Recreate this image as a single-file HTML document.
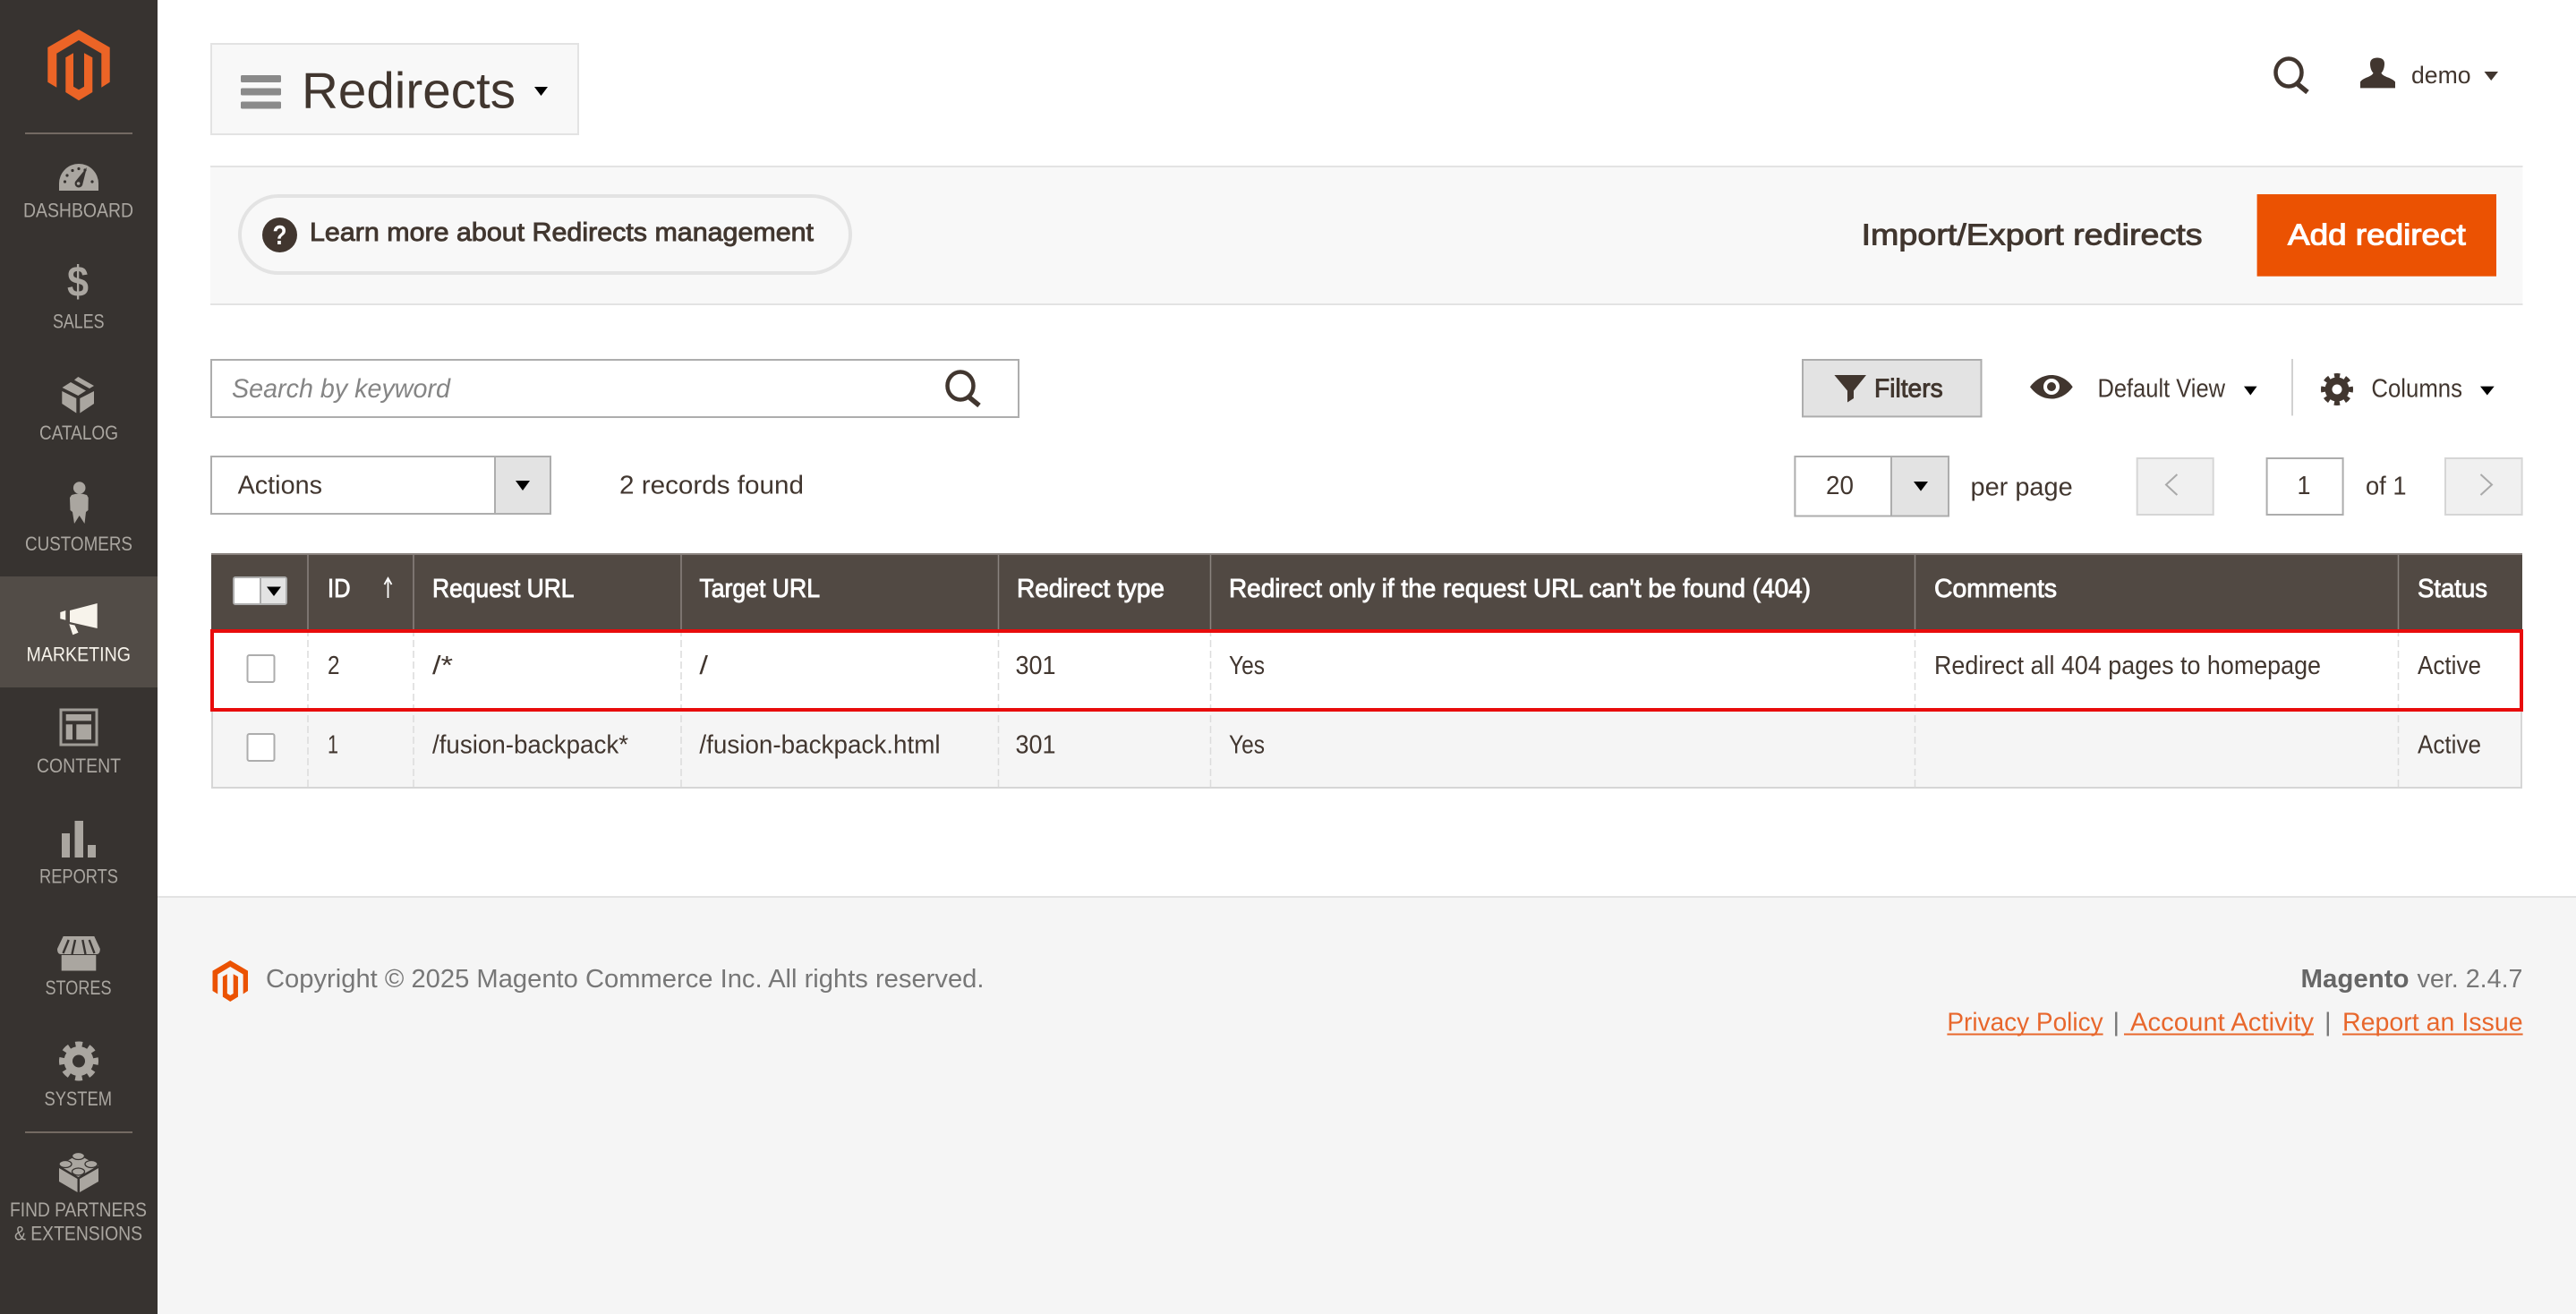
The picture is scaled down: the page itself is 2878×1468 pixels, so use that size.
<!DOCTYPE html>
<html lang="en"><head><meta charset="utf-8"><title>Redirects</title>
<style>
html,body{margin:0;padding:0;background:#fff}
svg{display:block}
text{font-family:"Liberation Sans",sans-serif;font-size:29px;fill:#41362f}
.s{stroke:#41362f;stroke-width:.9px}
.w{fill:#fff;stroke:#fff;stroke-width:.9px}
.n{font-size:22px;fill:#aaa6a0}
.f{fill:#777}
.l{fill:#e8672c}
</style></head><body>
<svg width="2878" height="1468" viewBox="0 0 2878 1468" xmlns="http://www.w3.org/2000/svg">
<!-- sidebar -->
<rect x="0" y="0" width="176" height="1468" fill="#373330"/>
<rect x="0" y="644" width="176" height="124" fill="#524c47"/>
<g fill="#ec6426">
<path d="M88 33L122.7 53V91.7L113.3 97.7V59.7L88 45L63.3 59.7V97.7L53.3 91.7V53Z"/>
<path d="M73.3 64.3L82 59.3V96.7L88 100.3L94 96.7V59.3L103.3 64.3V103L88 112.3L73.3 103Z"/>
</g>
<rect x="28" y="148" width="120" height="2" fill="#736a62"/>
<rect x="28" y="1264" width="120" height="2" fill="#736a62"/>
<!-- dashboard -->
<path d="M66 213V205A22 22 0 0 1 110 205V213Z" fill="#aaa6a0"/>
<g fill="#373330"><circle cx="72.5" cy="203" r="1.6"/><circle cx="75" cy="196" r="1.6"/><circle cx="81" cy="190.5" r="1.6"/><circle cx="88" cy="188.5" r="1.6"/><circle cx="95" cy="190" r="1.6"/><circle cx="103" cy="203" r="1.6"/><path d="M84 203L97 187L92 207A4.4 4.4 0 1 1 84 203Z"/></g>
<circle cx="87.6" cy="205" r="1.8" fill="#aaa6a0"/>
<!-- sales -->
<text x="75" y="331" textLength="24" lengthAdjust="spacingAndGlyphs" style="font-size:48px;font-weight:bold;fill:#aaa6a0">$</text>
<!-- catalog -->
<g fill="#aaa6a0"><path d="M69.3 437L85.3 445V461.5L69.3 451Z"/><path d="M89.3 445L105 437V451L89.3 461.5Z"/><path d="M69.5 433L79 427L96 436.5L87.3 442Z"/><path d="M83 424.5L87.3 421L105 431L100 434Z"/></g>
<!-- customers -->
<g fill="#aaa6a0"><circle cx="88.7" cy="545" r="6.8"/><path d="M80 553Q88.7 550 97 553L98.7 556L98.5 570L96 572L94.5 585L88.7 576L83 585L81 572L78.5 570L78 556Z"/></g>
<!-- marketing -->
<g fill="#f7f3eb"><path d="M78 682L108.7 674V702L78 695Z"/><path d="M67.3 684L73.3 682V692.7L67.3 691.3Z"/><path d="M77.3 697.3L83.5 698.5L87.5 706.7L81.3 709.3Z"/></g>
<!-- content -->
<rect x="68" y="793" width="40" height="39" fill="none" stroke="#a09d97" stroke-width="3"/>
<g fill="#aaa6a0"><rect x="73.7" y="798" width="28.3" height="7.3"/><rect x="73.7" y="809.3" width="7.3" height="17"/><rect x="85.3" y="809.3" width="16.7" height="17"/></g>
<!-- reports -->
<g fill="#aaa6a0"><rect x="69" y="931" width="9" height="27"/><rect x="83.5" y="917" width="9.5" height="41"/><rect x="98" y="944" width="9" height="14"/></g>
<!-- stores -->
<path d="M70.7 1046H105.3L111.8 1060Q111.8 1066 108 1066H68Q64 1066 64 1060Z" fill="#aaa6a0"/>
<rect x="68.7" y="1067" width="38.6" height="17.5" fill="#aaa6a0"/>
<path d="M76.7 1050L70.5 1065M84 1050L80.5 1066M92.3 1050L95.5 1066M99.7 1050L105.5 1065" stroke="#373330" stroke-width="2.4" fill="none"/>
<!-- system -->
<circle cx="88" cy="1185.5" r="16.5" fill="#aaa6a0"/>
<circle cx="88" cy="1185.5" r="18.5" fill="none" stroke="#aaa6a0" stroke-width="7" stroke-dasharray="7.5 7.03" stroke-dashoffset="3.75"/>
<circle cx="88" cy="1185.5" r="7" fill="#373330"/>
<!-- partners -->
<g fill="#aaa6a0"><path d="M66 1305L86.5 1317V1332L66 1320Z"/><path d="M89 1317L110 1305V1320L89 1332Z"/><path d="M66 1302L87.5 1290L110 1302L87.5 1315Z"/></g>
<g fill="#aaa6a0" stroke="#373330" stroke-width="1.3"><ellipse cx="87.5" cy="1291.5" rx="7" ry="4"/><ellipse cx="73" cy="1300.5" rx="7" ry="4"/><ellipse cx="102" cy="1300.5" rx="7" ry="4"/><ellipse cx="87.5" cy="1309" rx="7" ry="4"/></g>
<!-- sidebar labels -->
<text class="n" x="26" y="242.7" textLength="123" lengthAdjust="spacingAndGlyphs">DASHBOARD</text>
<text class="n" x="59" y="366.7" textLength="57.5" lengthAdjust="spacingAndGlyphs">SALES</text>
<text class="n" x="44" y="491" textLength="88" lengthAdjust="spacingAndGlyphs">CATALOG</text>
<text class="n" x="28" y="615" textLength="120" lengthAdjust="spacingAndGlyphs">CUSTOMERS</text>
<text class="n" x="29.5" y="738.7" textLength="116.5" lengthAdjust="spacingAndGlyphs" style="fill:#f7f3eb">MARKETING</text>
<text class="n" x="41" y="863" textLength="94" lengthAdjust="spacingAndGlyphs">CONTENT</text>
<text class="n" x="44" y="986.7" textLength="88" lengthAdjust="spacingAndGlyphs">REPORTS</text>
<text class="n" x="50.5" y="1111" textLength="74" lengthAdjust="spacingAndGlyphs">STORES</text>
<text class="n" x="49.5" y="1235" textLength="75.5" lengthAdjust="spacingAndGlyphs">SYSTEM</text>
<text class="n" x="11" y="1359" textLength="153" lengthAdjust="spacingAndGlyphs">FIND PARTNERS</text>
<text class="n" x="16" y="1385.7" textLength="143" lengthAdjust="spacingAndGlyphs">&amp; EXTENSIONS</text>

<!-- title -->
<rect x="236" y="49" width="410" height="101" fill="#f8f8f8" stroke="#e3e3e3" stroke-width="2"/>
<g fill="#8a8a8a"><rect x="269" y="84" width="45" height="8" rx="1.5"/><rect x="269" y="98.5" width="45" height="8" rx="1.5"/><rect x="269" y="113.5" width="45" height="8" rx="1.5"/></g>
<text x="337" y="120.7" textLength="239" lengthAdjust="spacingAndGlyphs" style="font-size:57px">Redirects</text>
<path d="M597 97H612L604.5 107Z" fill="#000"/>
<!-- top right -->
<g fill="none" stroke="#41362f"><ellipse cx="2557" cy="81" rx="14.5" ry="15.5" stroke-width="4.5"/><path d="M2567 94L2578 103" stroke-width="5.5"/></g>
<path d="M2637 98.4V91.5C2640 86.5 2650 86 2651.5 81.5C2648 78 2648 72 2648 71C2648 66 2652 64.5 2656 64.5C2660 64.5 2664 66 2664 71C2664 72 2664 78 2660.5 81.5C2662 86 2672 86.5 2676 91.5V98.4Z" fill="#41362f"/>
<text x="2694" y="93" textLength="66.6" lengthAdjust="spacingAndGlyphs" style="font-size:27px">demo</text>
<path d="M2775.5 80H2791L2783.2 90Z" fill="#41362f"/>
<!-- action bar -->
<rect x="235" y="185" width="2583.5" height="155" fill="#f8f8f8"/>
<rect x="235" y="185" width="2583.5" height="2" fill="#e3e3e3"/>
<rect x="235" y="339" width="2583.5" height="2" fill="#e3e3e3"/>
<rect x="268" y="219" width="682" height="86" rx="43" fill="#f8f8f8" stroke="#e3e3e3" stroke-width="4"/>
<circle cx="312.5" cy="262.5" r="19.5" fill="#41362f"/>
<text x="304.5" y="273" textLength="16" lengthAdjust="spacingAndGlyphs" style="font-size:31px;font-weight:bold;fill:#fff">?</text>
<text class="s" x="346" y="269" textLength="563" lengthAdjust="spacingAndGlyphs">Learn more about Redirects management</text>
<text class="s" x="2079.6" y="273.5" textLength="381" lengthAdjust="spacingAndGlyphs" style="font-size:33px">Import/Export redirects</text>
<rect x="2521.6" y="217" width="267.4" height="91.7" fill="#eb5202"/>
<text class="w" x="2556" y="273.5" textLength="198.7" lengthAdjust="spacingAndGlyphs" style="font-size:33px;stroke-width:1.1px">Add redirect</text>
<!-- search -->
<rect x="236" y="402" width="902" height="64" fill="#fff" stroke="#adadad" stroke-width="2"/>
<text x="259" y="444" textLength="244" lengthAdjust="spacingAndGlyphs" style="font-style:italic;fill:#858585;font-size:30px">Search by keyword</text>
<g fill="none" stroke="#41362f" transform="translate(-1484 350)"><ellipse cx="2557" cy="81" rx="14.5" ry="15.5" stroke-width="4.5"/><path d="M2567 94L2578 103" stroke-width="5.5"/></g>
<!-- filters etc -->
<rect x="2014" y="402" width="199.5" height="63.4" fill="#e3e3e3" stroke="#adadad" stroke-width="2"/>
<path d="M2049.4 419H2085L2071 436.5V445L2064 449.5V436.5Z" fill="#41362f"/>
<text class="s" x="2094" y="443.5" textLength="76.7" lengthAdjust="spacingAndGlyphs">Filters</text>
<path d="M2268 432.2C2274 424 2283 419 2292 419C2301 419 2310 424 2315.7 432.2C2310 440.5 2301 445.5 2292 445.5C2283 445.5 2274 440.5 2268 432.2Z" fill="#41362f"/>
<circle cx="2292" cy="432" r="9" fill="#fff"/><circle cx="2292" cy="432" r="5" fill="#41362f"/>
<text x="2343.5" y="443.5" textLength="142.5" lengthAdjust="spacingAndGlyphs">Default View</text>
<path d="M2507 431.6H2521.6L2514.3 441.5Z" fill="#000"/>
<rect x="2560" y="401" width="2" height="63.4" fill="#d1d1d1"/>
<circle cx="2611" cy="435" r="13.5" fill="#41362f"/>
<circle cx="2611" cy="435" r="15" fill="none" stroke="#41362f" stroke-width="6" stroke-dasharray="6 5.78" stroke-dashoffset="3"/>
<circle cx="2611" cy="435" r="5.5" fill="#fff"/>
<text x="2649.4" y="443.5" textLength="101.6" lengthAdjust="spacingAndGlyphs">Columns</text>
<path d="M2771 431.6H2786.7L2778.8 441.5Z" fill="#000"/>
<!-- actions select -->
<rect x="236" y="510" width="379" height="64" fill="#fff" stroke="#adadad" stroke-width="2"/>
<rect x="552" y="511" width="62" height="62" fill="#e3e3e3"/><rect x="552" y="511" width="2" height="62" fill="#adadad"/>
<path d="M576 537H592L584 548Z" fill="#000"/>
<text x="265.6" y="551.7" textLength="94.4" lengthAdjust="spacingAndGlyphs">Actions</text>
<text x="692" y="551.5" textLength="206" lengthAdjust="spacingAndGlyphs">2 records found</text>
<!-- pager -->
<rect x="2005.4" y="510" width="171.6" height="66.5" fill="#fff" stroke="#adadad" stroke-width="2"/>
<rect x="2112" y="511" width="64" height="64.5" fill="#e3e3e3"/><rect x="2112" y="511" width="2" height="64.5" fill="#adadad"/>
<path d="M2138 538H2154L2146 548.6Z" fill="#000"/>
<text x="2040" y="552" textLength="31" lengthAdjust="spacingAndGlyphs">20</text>
<text x="2201.5" y="553.4" textLength="114.2" lengthAdjust="spacingAndGlyphs">per page</text>
<rect x="2387.7" y="512" width="85" height="63" fill="#f0f0f0" stroke="#d6d6d6" stroke-width="2"/>
<path d="M2432.4 530L2420 541.5L2432.4 553" fill="none" stroke="#a9a9a9" stroke-width="2"/>
<rect x="2532.6" y="512" width="85" height="63" fill="#fff" stroke="#adadad" stroke-width="2"/>
<text x="2566.5" y="552" textLength="15" lengthAdjust="spacingAndGlyphs">1</text>
<text x="2643" y="552.5" textLength="45.5" lengthAdjust="spacingAndGlyphs">of 1</text>
<rect x="2732" y="512" width="85.6" height="63" fill="#f0f0f0" stroke="#d6d6d6" stroke-width="2"/>
<path d="M2771.5 530L2784 541.5L2771.5 553" fill="none" stroke="#a9a9a9" stroke-width="2"/>
<!-- table -->
<rect x="236" y="618" width="2582" height="85" fill="#514943"/>
<rect x="236" y="618" width="2582" height="2" fill="#8a837f"/>
<rect x="236" y="703" width="2582" height="92" fill="#fff"/>
<rect x="236" y="795" width="2582" height="84" fill="#f5f5f5"/>
<rect x="236" y="795" width="2" height="86" fill="#d6d6d6"/><rect x="2816" y="795" width="2" height="86" fill="#d6d6d6"/>
<rect x="236" y="879" width="2582" height="2" fill="#d6d6d6"/>
<g stroke="#8a837f" stroke-width="1.5">
<path d="M344 620V703M462 620V703M761 620V703M1115.5 620V703M1352.5 620V703M2139.5 620V703M2679.5 620V703"/></g>
<g stroke="#dcdcdc" stroke-width="1.5" stroke-dasharray="8 4">
<path d="M344 703V879M462 703V879M761 703V879M1115.5 703V879M1352.5 703V879M2139.5 703V879M2679.5 703V879"/></g>
<!-- header checkbox -->
<rect x="261" y="645" width="59" height="30" rx="2" fill="#fff" stroke="#adadad" stroke-width="2"/>
<rect x="291" y="646" width="28" height="28" fill="#e3e3e3"/><rect x="290" y="646" width="2" height="28" fill="#adadad"/>
<path d="M298 655.5H314L306 666Z" fill="#000"/>
<rect x="276.5" y="732" width="30" height="30" rx="2" fill="#fff" stroke="#adadad" stroke-width="2"/>
<rect x="276.5" y="820" width="30" height="30" rx="2" fill="#fff" stroke="#adadad" stroke-width="2"/>
<!-- header text -->
<text class="w" x="366" y="667" textLength="25.5" lengthAdjust="spacingAndGlyphs">ID</text>
<path d="M433.5 668V648M429.5 653L433.5 646L437.5 653" fill="none" stroke="#fff" stroke-width="1.8"/>
<text class="w" x="483" y="667" textLength="158.5" lengthAdjust="spacingAndGlyphs">Request URL</text>
<text class="w" x="781.4" y="667" textLength="134.6" lengthAdjust="spacingAndGlyphs">Target URL</text>
<text class="w" x="1136" y="667" textLength="165" lengthAdjust="spacingAndGlyphs">Redirect type</text>
<text class="w" x="1373" y="667" textLength="650" lengthAdjust="spacingAndGlyphs">Redirect only if the request URL can't be found (404)</text>
<text class="w" x="2161" y="667" textLength="137" lengthAdjust="spacingAndGlyphs">Comments</text>
<text class="w" x="2701" y="667" textLength="78" lengthAdjust="spacingAndGlyphs">Status</text>
<!-- rows -->
<text x="366" y="753" textLength="13.5" lengthAdjust="spacingAndGlyphs">2</text>
<text x="483" y="753" textLength="23" lengthAdjust="spacingAndGlyphs">/*</text>
<text x="781.4" y="753" textLength="9.6" lengthAdjust="spacingAndGlyphs">/</text>
<text x="1134.5" y="753" textLength="45" lengthAdjust="spacingAndGlyphs">301</text>
<text x="1373" y="753" textLength="40" lengthAdjust="spacingAndGlyphs">Yes</text>
<text x="2161" y="753" textLength="432" lengthAdjust="spacingAndGlyphs">Redirect all 404 pages to homepage</text>
<text x="2701" y="753" textLength="71" lengthAdjust="spacingAndGlyphs">Active</text>
<text x="366" y="841.7" textLength="12" lengthAdjust="spacingAndGlyphs">1</text>
<text x="483" y="841.7" textLength="219" lengthAdjust="spacingAndGlyphs">/fusion-backpack*</text>
<text x="781.4" y="841.7" textLength="269.2" lengthAdjust="spacingAndGlyphs">/fusion-backpack.html</text>
<text x="1134.5" y="841.7" textLength="45" lengthAdjust="spacingAndGlyphs">301</text>
<text x="1373" y="841.7" textLength="40" lengthAdjust="spacingAndGlyphs">Yes</text>
<text x="2701" y="841.7" textLength="71" lengthAdjust="spacingAndGlyphs">Active</text>
<rect x="237" y="705" width="2580" height="88" fill="none" stroke="#e80c0c" stroke-width="4"/>
<!-- footer -->
<rect x="176" y="1001" width="2702" height="467" fill="#f5f5f5"/>
<rect x="176" y="1001" width="2702" height="2" fill="#e3e3e3"/>
<g fill="#eb5202" transform="translate(237.5 1073) scale(.569 .58) translate(-53.3 -33)">
<path d="M88 33L122.7 53V91.7L113.3 97.7V59.7L88 45L63.3 59.7V97.7L53.3 91.7V53Z"/>
<path d="M73.3 64.3L82 59.3V96.7L88 100.3L94 96.7V59.3L103.3 64.3V103L88 112.3L73.3 103Z"/>
</g>
<text class="f" x="297" y="1103" textLength="802.5" lengthAdjust="spacingAndGlyphs">Copyright © 2025 Magento Commerce Inc. All rights reserved.</text>
<text class="f" x="2570.5" y="1103" textLength="121" lengthAdjust="spacingAndGlyphs" style="font-weight:bold;fill:#666">Magento</text>
<text class="f" x="2700.5" y="1103" textLength="118" lengthAdjust="spacingAndGlyphs">ver. 2.4.7</text>
<text class="l" x="2175.4" y="1151.7" textLength="174.2" lengthAdjust="spacingAndGlyphs">Privacy Policy</text>
<text class="f" x="2360.5" y="1151.7">|</text>
<text class="l" x="2380" y="1151.7" textLength="205" lengthAdjust="spacingAndGlyphs">Account Activity</text>
<text class="f" x="2597" y="1151.7">|</text>
<text class="l" x="2617" y="1151.7" textLength="201.6" lengthAdjust="spacingAndGlyphs">Report an Issue</text>
<g fill="#e8672c"><rect x="2175.4" y="1154.5" width="174.2" height="2"/><rect x="2373" y="1154.5" width="212" height="2"/><rect x="2617" y="1154.5" width="201.6" height="2"/></g>
</svg>
</body></html>
